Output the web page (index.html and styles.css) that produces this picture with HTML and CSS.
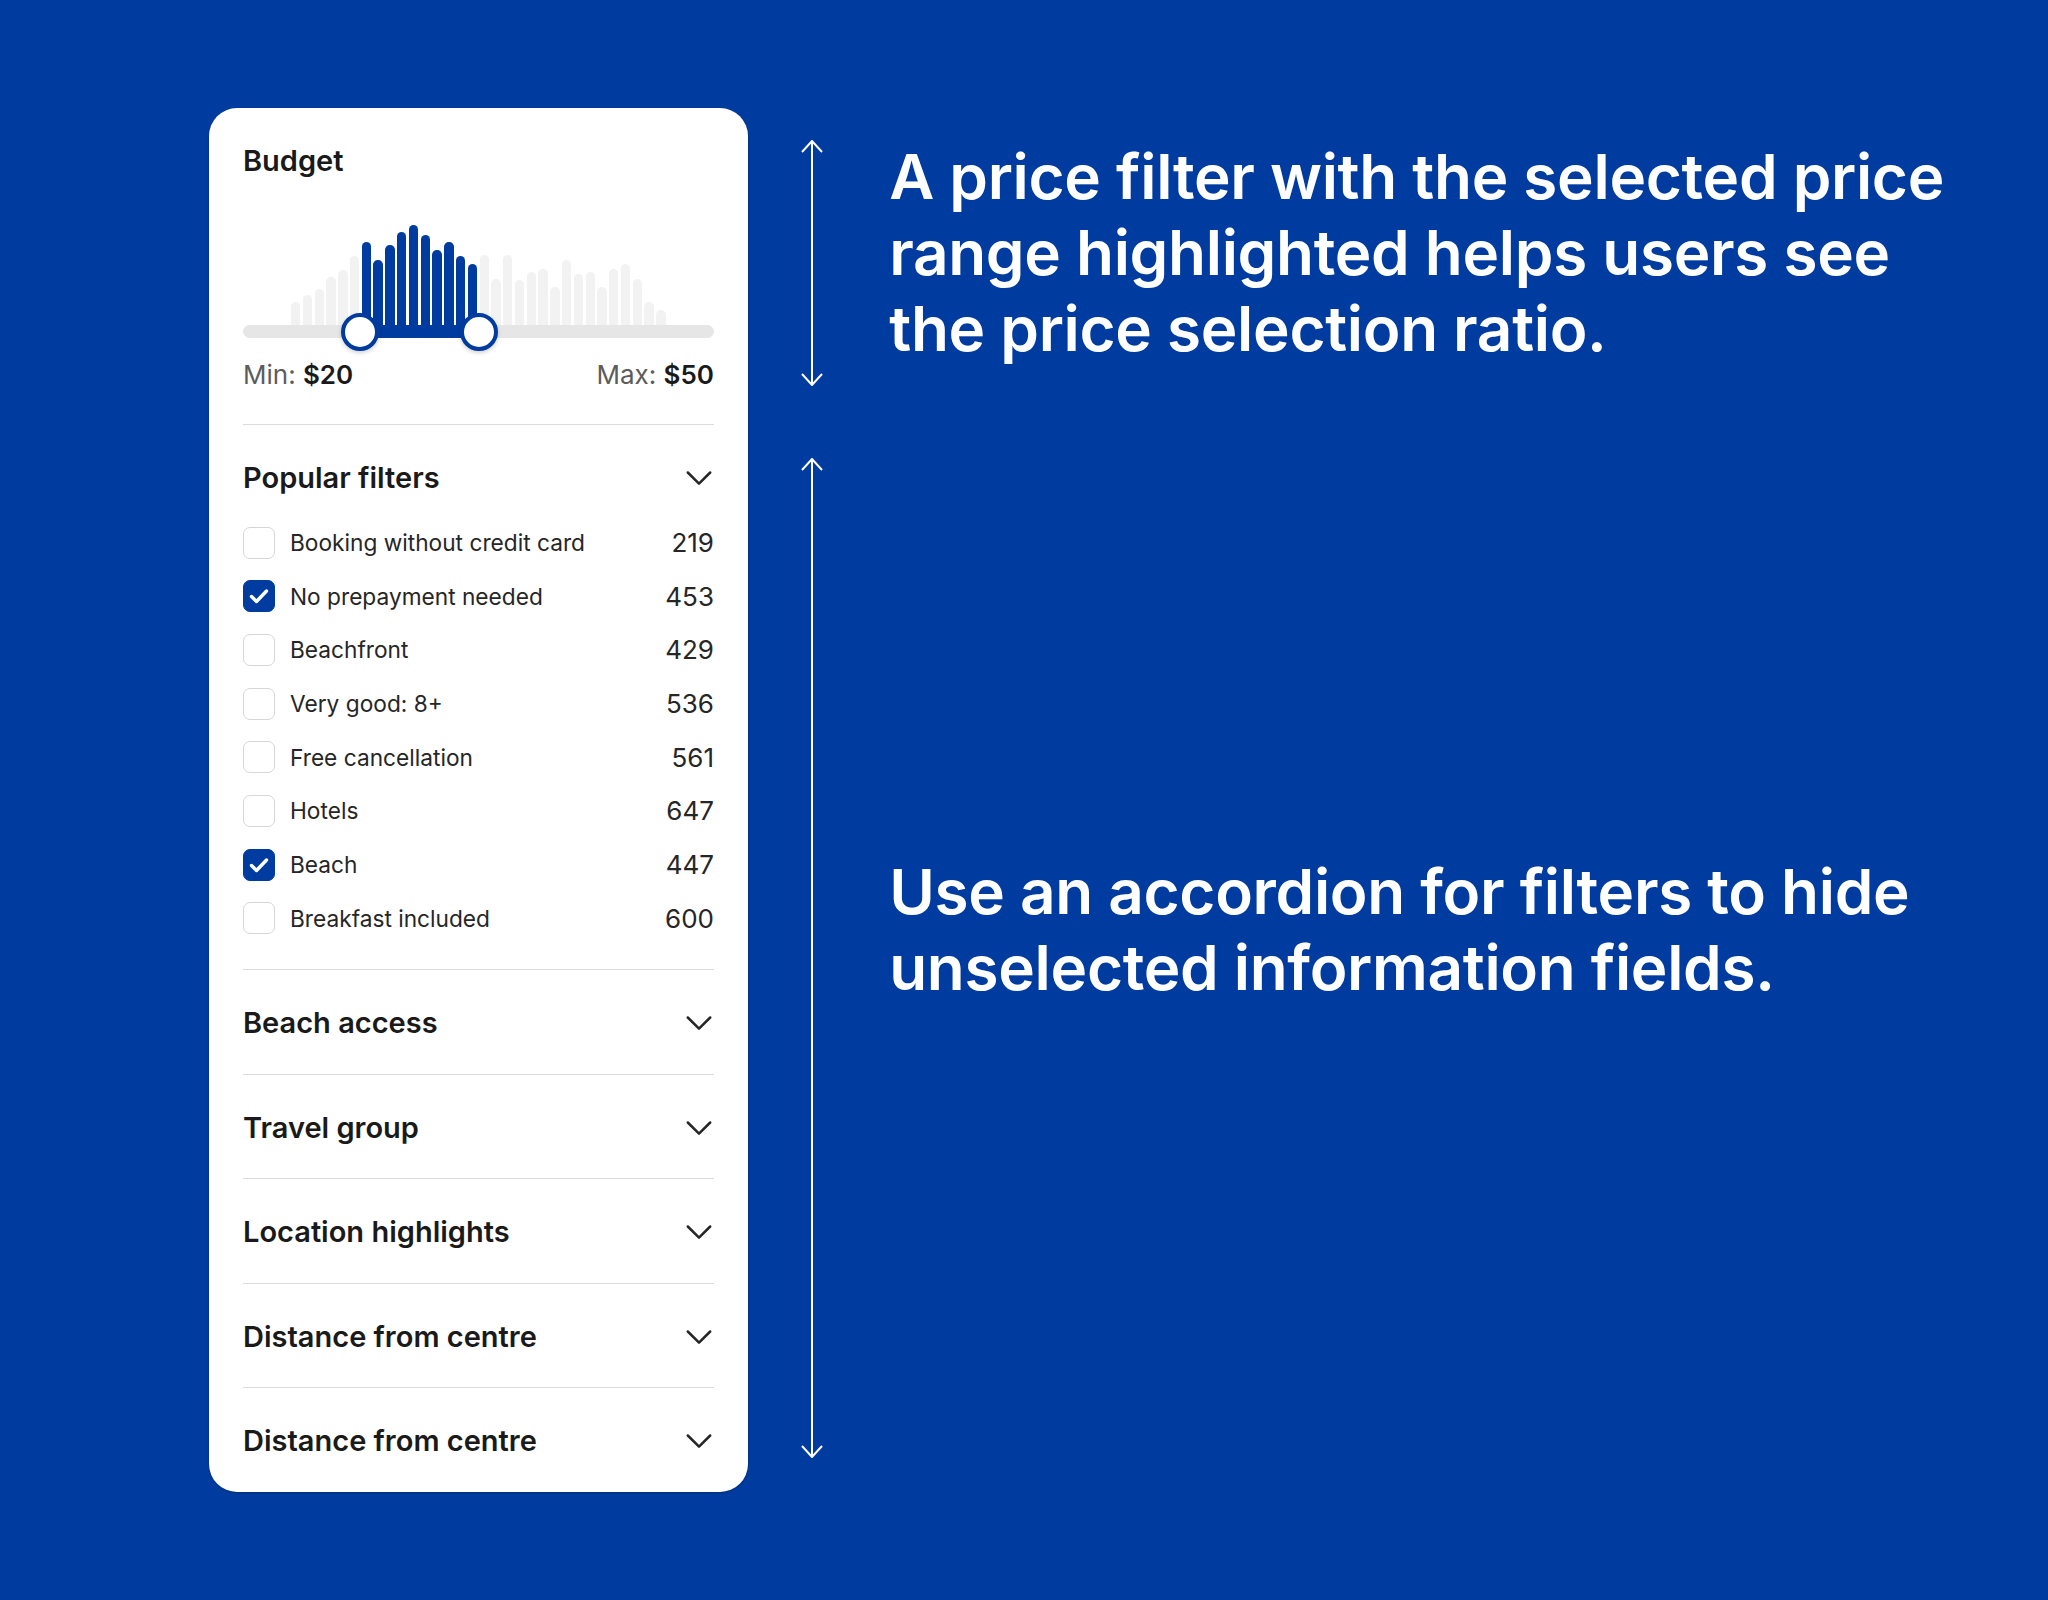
FILE: index.html
```html
<!DOCTYPE html>
<html lang="en">
<head>
<meta charset="utf-8">
<title>Price filter and accordion</title>
<link rel="stylesheet" href="styles.css">
</head>
<body>
<main class="page">
  <section class="card">
    <div class="budget">
      <h2 class="title">Budget</h2>
      <div class="chart">
        <div class="bars">
          <span class="bar" style="height:29.7px"></span>
          <span class="bar" style="height:36.7px"></span>
          <span class="bar" style="height:43.3px"></span>
          <span class="bar" style="height:55px"></span>
          <span class="bar" style="height:61.7px"></span>
          <span class="bar" style="height:75.7px"></span>
          <span class="bar on" style="height:90px"></span>
          <span class="bar on" style="height:71.7px"></span>
          <span class="bar on" style="height:87px"></span>
          <span class="bar on" style="height:100.3px"></span>
          <span class="bar on" style="height:107px"></span>
          <span class="bar on" style="height:97px"></span>
          <span class="bar on" style="height:81.7px"></span>
          <span class="bar on" style="height:90px"></span>
          <span class="bar on" style="height:75.7px"></span>
          <span class="bar on" style="height:68.3px"></span>
          <span class="bar" style="height:76.7px"></span>
          <span class="bar" style="height:53.3px"></span>
          <span class="bar" style="height:76.7px"></span>
          <span class="bar" style="height:51.7px"></span>
          <span class="bar" style="height:60px"></span>
          <span class="bar" style="height:63.3px"></span>
          <span class="bar" style="height:45px"></span>
          <span class="bar" style="height:71.7px"></span>
          <span class="bar" style="height:58.3px"></span>
          <span class="bar" style="height:60px"></span>
          <span class="bar" style="height:45px"></span>
          <span class="bar" style="height:63.3px"></span>
          <span class="bar" style="height:68.3px"></span>
          <span class="bar" style="height:53.3px"></span>
          <span class="bar" style="height:30px"></span>
          <span class="bar" style="height:21.7px"></span>
        </div>
        <div class="track"></div>
        <div class="range"></div>
        <span class="handle handle-min"></span>
        <span class="handle handle-max"></span>
      </div>
      <div class="limits">
        <span class="limit">Min: <b>$20</b></span>
        <span class="limit">Max: <b>$50</b></span>
      </div>
    </div>

    <div class="group">
      <div class="group-head">
        <h3 class="title">Popular filters</h3>
        <svg class="chev" viewBox="0 0 26 26" width="26" height="26"><path d="M1.8 7.5 L13 18.7 L24.2 7.5"/></svg>
      </div>
      <ul class="options">
        <li class="option"><span class="box"></span><span class="label">Booking without credit card</span><span class="count">219</span></li>
        <li class="option"><span class="box checked"><svg viewBox="0 0 32 32" width="32" height="32"><polyline points="8.5,16.5 13.5,21.5 23.5,11"/></svg></span><span class="label">No prepayment needed</span><span class="count">453</span></li>
        <li class="option"><span class="box"></span><span class="label">Beachfront</span><span class="count">429</span></li>
        <li class="option"><span class="box"></span><span class="label">Very good: 8+</span><span class="count">536</span></li>
        <li class="option"><span class="box"></span><span class="label">Free cancellation</span><span class="count">561</span></li>
        <li class="option"><span class="box"></span><span class="label">Hotels</span><span class="count">647</span></li>
        <li class="option"><span class="box checked"><svg viewBox="0 0 32 32" width="32" height="32"><polyline points="8.5,16.5 13.5,21.5 23.5,11"/></svg></span><span class="label">Beach</span><span class="count">447</span></li>
        <li class="option"><span class="box"></span><span class="label">Breakfast included</span><span class="count">600</span></li>
      </ul>
    </div>

    <div class="group collapsed">
      <div class="group-head">
        <h3 class="title">Beach access</h3>
        <svg class="chev" viewBox="0 0 26 26" width="26" height="26"><path d="M1.8 7.5 L13 18.7 L24.2 7.5"/></svg>
      </div>
    </div>
    <div class="group collapsed">
      <div class="group-head">
        <h3 class="title">Travel group</h3>
        <svg class="chev" viewBox="0 0 26 26" width="26" height="26"><path d="M1.8 7.5 L13 18.7 L24.2 7.5"/></svg>
      </div>
    </div>
    <div class="group collapsed">
      <div class="group-head">
        <h3 class="title">Location highlights</h3>
        <svg class="chev" viewBox="0 0 26 26" width="26" height="26"><path d="M1.8 7.5 L13 18.7 L24.2 7.5"/></svg>
      </div>
    </div>
    <div class="group collapsed">
      <div class="group-head">
        <h3 class="title">Distance from centre</h3>
        <svg class="chev" viewBox="0 0 26 26" width="26" height="26"><path d="M1.8 7.5 L13 18.7 L24.2 7.5"/></svg>
      </div>
    </div>
    <div class="group collapsed">
      <div class="group-head">
        <h3 class="title">Distance from centre</h3>
        <svg class="chev" viewBox="0 0 26 26" width="26" height="26"><path d="M1.8 7.5 L13 18.7 L24.2 7.5"/></svg>
      </div>
    </div>
  </section>

  <section class="notes">
    <div class="note note-top">
      <svg class="arrow" viewBox="0 0 22 246" width="22" height="246" preserveAspectRatio="none">
        <line x1="11" y1="1" x2="11" y2="245"/>
        <polyline points="1,12 11,1 21,12"/>
        <polyline points="1,234 11,245 21,234"/>
      </svg>
      <p class="note-text">A price filter with the selected price<br>range highlighted helps users see<br>the price selection ratio.</p>
    </div>
    <div class="note note-bottom">
      <svg class="arrow" viewBox="0 0 22 1000" width="22" height="1000" preserveAspectRatio="none">
        <line x1="11" y1="1" x2="11" y2="999"/>
        <polyline points="1,12 11,1 21,12"/>
        <polyline points="1,988 11,999 21,988"/>
      </svg>
      <p class="note-text">Use an accordion for filters to hide<br>unselected information fields.</p>
    </div>
  </section>
</main>
</body>
</html>
```

FILE: styles.css
```css
* { box-sizing: border-box; }

html, body {
  margin: 0;
  padding: 0;
}

body {
  width: 2048px;
  height: 1600px;
  background: #003c9f;
  font-family: Inter, "Noto Sans", "Liberation Sans", sans-serif;
  color: #1a1a1a;
  overflow: hidden;
}

.page {
  display: flex;
  align-items: flex-start;
  padding: 108px 0 0 209px;
}

/* ---------- card ---------- */
.card {
  width: 539px;
  background: #ffffff;
  border-radius: 28px;
  padding: 0 34px;
  box-shadow: 0 1px 3px rgba(0, 0, 0, 0.25);
  flex: none;
}

.title {
  margin: 0;
  font-size: 29px;
  line-height: 36px;
  font-weight: 600;
  color: #1a1a1a;
}

.budget {
  padding: 35px 0 33px;
}

.chart {
  position: relative;
  height: 170px;
  margin-top: 3px;
}

.bars {
  display: flex;
  align-items: flex-end;
  gap: 2.4px;
  height: 150px;
  padding-left: 48px;
}

.bar {
  flex: none;
  width: 9.4px;
  background: #f2f2f2;
  border-radius: 4.7px 4.7px 0 0;
}

.bar.on {
  background: #003c9f;
}

.track {
  position: absolute;
  left: 0;
  right: 0;
  top: 143px;
  height: 13.4px;
  border-radius: 7px;
  background: #e6e6e6;
}

.range {
  position: absolute;
  left: 116.5px;
  width: 119.3px;
  top: 143px;
  height: 13.4px;
  background: #003c9f;
}

.handle {
  position: absolute;
  top: 130.5px;
  width: 38px;
  height: 38px;
  border-radius: 50%;
  background: #ffffff;
  border: 4px solid #003c9f;
  box-shadow: 0 2px 4px rgba(0, 0, 0, 0.18);
}

.handle-min { left: 97.5px; }
.handle-max { left: 216.8px; }

.limits {
  display: flex;
  justify-content: space-between;
  margin-top: 7px;
  font-size: 26px;
  line-height: 32px;
}

.limit {
  color: #5c5c5c;
}

.limit b {
  color: #1a1a1a;
  font-weight: 600;
}

/* ---------- groups ---------- */
.group {
  border-top: 1px solid #dcdcdc;
  padding: 35px 0 35px;
}

.group.collapsed {
  padding: 35px 0 32.5px;
}

.group-head {
  display: flex;
  align-items: center;
  justify-content: space-between;
}

.chev {
  flex: none;
  margin-right: 2px;
  fill: none;
  stroke: #262626;
  stroke-width: 2.5;
  stroke-linecap: round;
  stroke-linejoin: round;
}

.options {
  list-style: none;
  margin: 30.5px 0 0;
  padding: 0;
  display: flex;
  flex-direction: column;
  gap: 21.7px;
}

.option {
  display: flex;
  align-items: center;
  height: 32px;
  font-size: 22.7px;
  color: #262626;
}

.box {
  flex: none;
  width: 32px;
  height: 32px;
  border: 1.5px solid #d6d6d6;
  border-radius: 7px;
  margin-right: 15px;
  display: flex;
  align-items: center;
  justify-content: center;
}

.box.checked {
  background: #003c9f;
  border-color: #003c9f;
}

.box svg {
  flex: none;
  fill: none;
  stroke: #ffffff;
  stroke-width: 3.4;
  stroke-linecap: round;
  stroke-linejoin: round;
}

.label {
  flex: 1;
}

.count {
  flex: none;
  font-size: 26px;
  color: #262626;
}

/* ---------- notes ---------- */
.notes {
  display: flex;
  flex-direction: column;
  gap: 72px;
  margin: 32px 0 0 52.7px;
}

.note {
  display: flex;
  align-items: flex-start;
  gap: 66.5px;
}

.arrow {
  flex: none;
  fill: none;
  stroke: #ffffff;
  stroke-width: 2;
}

.note-text {
  margin: 0;
  color: #ffffff;
  font-size: 62px;
  line-height: 76px;
  font-weight: 600;
  letter-spacing: -0.3px;
  white-space: nowrap;
}

.note-top .note-text {
  margin-top: -1px;
}

.note-bottom .note-text {
  margin-top: 396px;
}
```
